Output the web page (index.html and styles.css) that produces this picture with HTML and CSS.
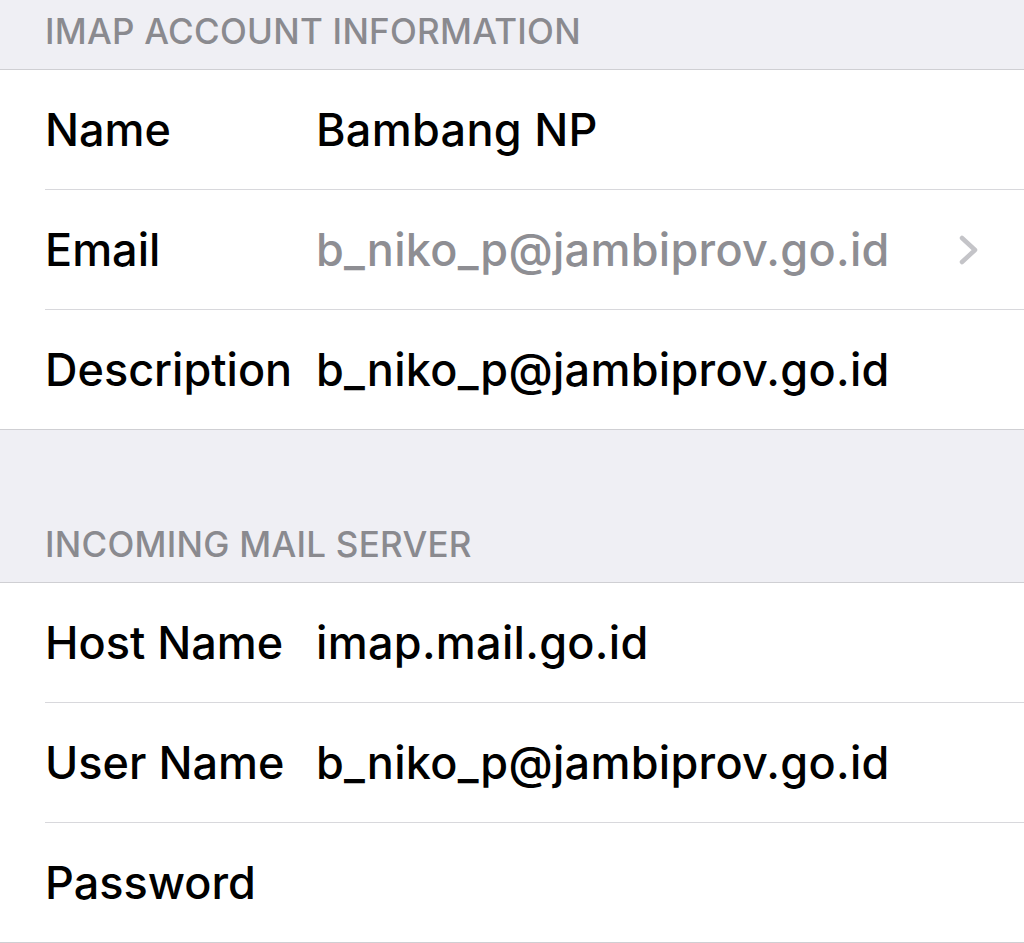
FILE: index.html
```html
<!DOCTYPE html>
<html lang="en">
<head>
    <meta charset="UTF-8">
    <title>IMAP Account</title>
    <link rel="stylesheet" href="styles.css">
</head>
<body>
<div class="page">
    <div class="group-header first">IMAP ACCOUNT INFORMATION</div>
    <div class="group">
        <div class="row">
            <span class="label">Name</span>
            <span class="value">Bambang NP</span>
        </div>
        <div class="row">
            <span class="label">Email</span>
            <span class="value muted">b_niko_p@jambiprov.go.id</span>
            <svg class="chevron" width="22" height="30" viewBox="0 0 22 30">
                <path d="M4 3 L17 15 L4 27" fill="none" stroke="#c4c4c8" stroke-width="4.5" stroke-linecap="round" stroke-linejoin="round"/>
            </svg>
        </div>
        <div class="row">
            <span class="label">Description</span>
            <span class="value">b_niko_p@jambiprov.go.id</span>
        </div>
    </div>
    <div class="group-header second">INCOMING MAIL SERVER</div>
    <div class="group">
        <div class="row">
            <span class="label">Host Name</span>
            <span class="value">imap.mail.go.id</span>
        </div>
        <div class="row">
            <span class="label">User Name</span>
            <span class="value">b_niko_p@jambiprov.go.id</span>
        </div>
        <div class="row">
            <span class="label">Password</span>
            <span class="value"></span>
        </div>
    </div>
</div>
</body>
</html>
```

FILE: styles.css
```css
*{
    margin: 0;
    padding: 0;
    box-sizing: border-box;
}
body{
    background-color: #efeff4;
    font-family: Inter, "Noto Sans", sans-serif;
}
.page{
    width: 1024px;
    height: 943px;
    overflow: hidden;
}
.group-header{
    display: flex;
    align-items: flex-end;
    padding: 0 45px 20px;
    font-size: 35px;
    font-weight: 500;
    line-height: 1;
    letter-spacing: 0.25px;
    color: #8a8a8f;
}
.group-header.first{
    height: 69px;
}
.group-header.second{
    height: 152px;
}
.group{
    background-color: #fff;
    border-top: 1px solid #cfcfd3;
    border-bottom: 1px solid #cfcfd3;
}
.row{
    display: flex;
    align-items: center;
    height: 120px;
    margin-left: 45px;
    border-bottom: 1px solid #d8d8dc;
    font-size: 45px;
    color: #000;
}
.row:last-child{
    height: 119px;
    border-bottom: none;
}
.label{
    width: 271px;
    flex-shrink: 0;
    font-weight: 500;
}
.value{
    flex: 1;
    font-weight: 500;
    letter-spacing: 0.3px;
}
.value.muted{
    color: #8e8e93;
}
.chevron{
    margin-right: 44px;
}
```
